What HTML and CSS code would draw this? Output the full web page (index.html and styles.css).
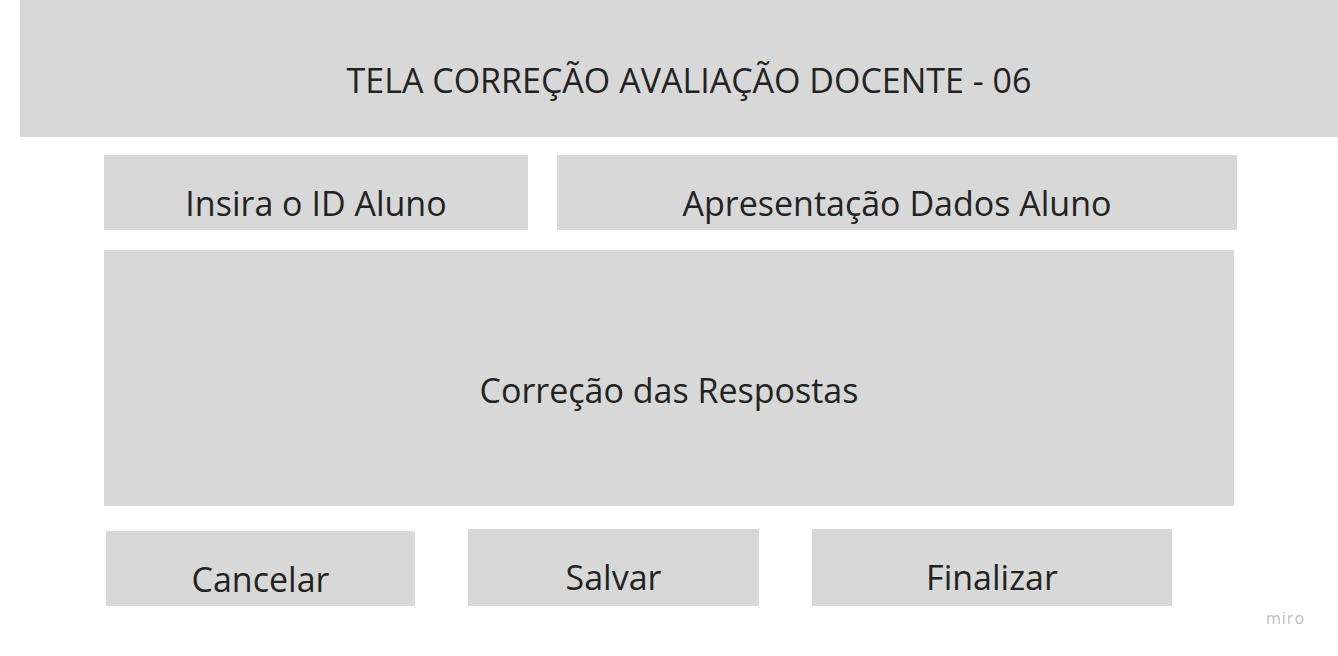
FILE: index.html
```html
<!DOCTYPE html>
<html lang="pt">
<head>
<meta charset="utf-8">
<title>Tela Correção Avaliação Docente - 06</title>
<link rel="stylesheet" href="styles.css">
</head>
<body>
<div class="board">
  <div class="header"><span>TELA CORREÇÃO AVALIAÇÃO DOCENTE - 06</span></div>
  <div class="row-top">
    <div class="box box-id"><span>Insira o ID Aluno</span></div>
    <div class="box box-dados"><span>Apresentação Dados Aluno</span></div>
  </div>
  <div class="box box-main"><span>Correção das Respostas</span></div>
  <div class="row-buttons">
    <div class="box btn btn-cancel"><span>Cancelar</span></div>
    <div class="box btn btn-save"><span>Salvar</span></div>
    <div class="box btn btn-finish"><span>Finalizar</span></div>
  </div>
  <div class="miro">miro</div>
</div>
</body>
</html>
```
FILE: styles.css
```css
html, body {
  margin: 0;
  padding: 0;
  background: #ffffff;
}
.board {
  position: relative;
  width: 1338px;
  height: 656px;
  overflow: hidden;
  font-family: "Open Sans", "Liberation Sans", sans-serif;
  color: #222222;
}
.header,
.box {
  background: #d8d8d8;
  display: flex;
  align-items: flex-start;
  justify-content: center;
  box-sizing: border-box;
  font-size: 34px;
  line-height: 46px;
  white-space: nowrap;
}
.header {
  margin-left: 20px;
  width: 1338px;
  height: 137px;
  padding-top: 57px;
}
.row-top {
  display: flex;
  margin-top: 18px;
  margin-left: 104px;
  gap: 29px;
  height: 75px;
}
.row-top .box {
  padding-top: 25px;
}
.box-id { width: 424px; }
.box-dados { width: 680px; }
.box-main {
  margin-top: 20px;
  margin-left: 104px;
  width: 1130px;
  height: 256px;
  padding-top: 117px;
}
.row-buttons {
  display: flex;
  align-items: flex-start;
  margin-top: 23px;
  margin-left: 106px;
  gap: 53px;
}
.btn {
  height: 77px;
  padding-top: 25px;
}
.btn-cancel { width: 309px; height: 75px; margin-top: 2px; }
.btn-save { width: 291px; }
.btn-finish { width: 360px; }
.miro {
  position: absolute;
  left: 1266px;
  top: 607px;
  font-size: 16px;
  line-height: 22px;
  letter-spacing: 1px;
  color: #bdbdbd;
}
```
